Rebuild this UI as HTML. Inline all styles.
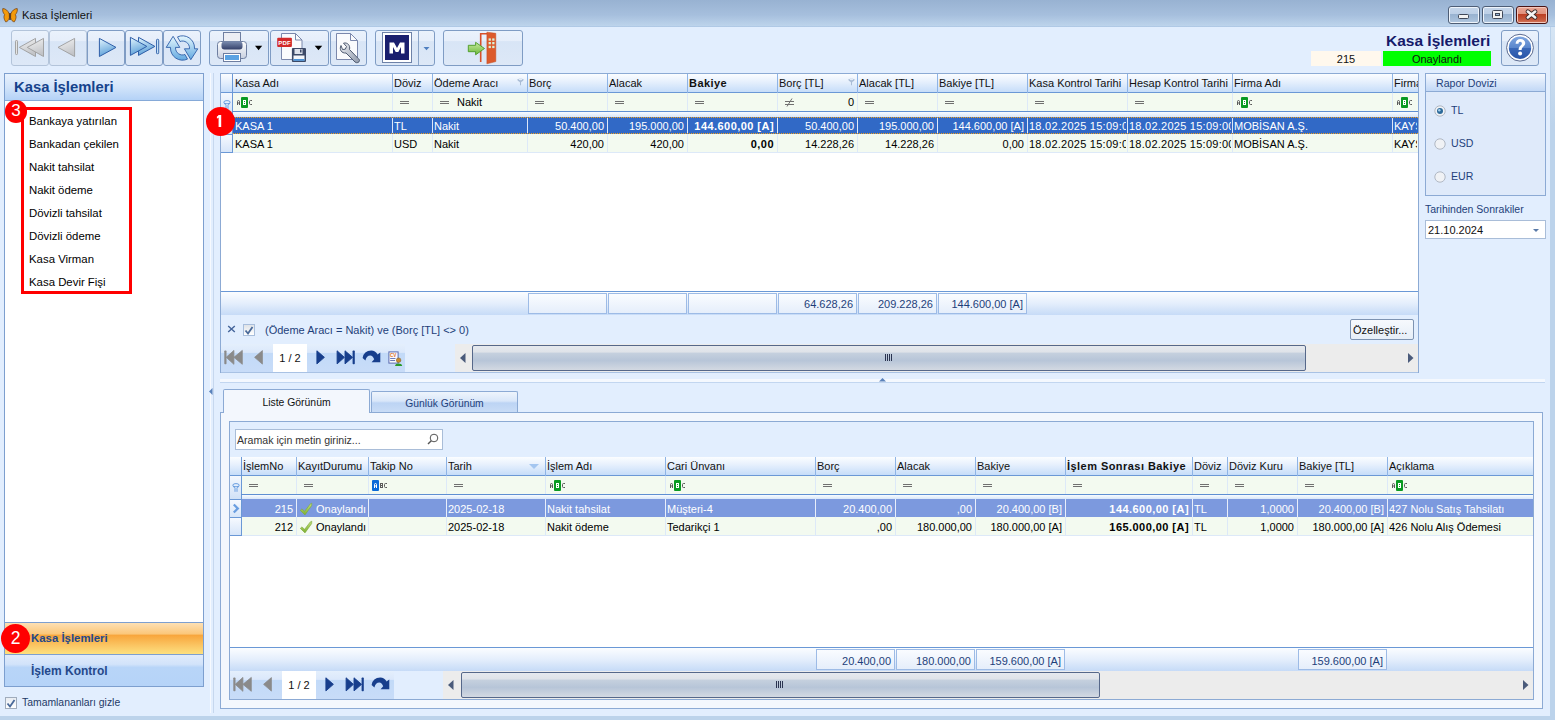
<!DOCTYPE html><html><head><meta charset="utf-8"><style>
*{box-sizing:border-box;margin:0;padding:0}
html,body{width:1555px;height:720px;overflow:hidden}
body{position:relative;background:#e2eefe;font-family:"Liberation Sans",sans-serif;font-size:11px;color:#000}
.a{position:absolute}
.t{position:absolute;white-space:nowrap;line-height:12px}
svg{position:absolute;overflow:visible}
.wb{position:absolute;top:6px;height:18px;width:32px;border:1px solid #52698a;border-radius:3px;background:linear-gradient(#e8eff8,#d3dfee 45%,#b9cbe1 50%,#cfdded)}
.tb{position:absolute;top:30px;height:36px;border:1px solid #7f9cc4;border-radius:3px;background:linear-gradient(#eaf2fc 0,#e6eefa 30%,#d8e5f6 31%,#dde8f7 100%)}
.tb.dis{border-color:#b3c4da}
.badge{position:absolute;border-radius:50%;background:#ff0000;color:#fff;text-align:center}
.hdr{position:absolute;background:linear-gradient(#f7faff,#e9f1fc 45%,#d3e3f8 100%);border-bottom:1px solid #6d97d3}
.col{position:absolute;top:0;height:100%;border-right:1px solid #8bb0e2}
.frow{position:absolute;background:#f3faf0;border-bottom:1px solid #5e8ed0}
.cell{position:absolute;top:0;height:100%;overflow:hidden;white-space:nowrap;line-height:17px;padding:0 3px}
.r{text-align:right}
.b{font-weight:bold}
.eq{position:absolute;width:9px;height:4px;border-top:1px solid #666;border-bottom:1px solid #666}
</style></head><body>
<div class="a" style="left:0;top:0;width:1555px;height:27px;background:linear-gradient(#98b2d2,#a6bfdd 55%,#bcd3eb 95%,#a8c3e2)"></div>
<svg style="left:2px;top:8px" width="16" height="15" viewBox="0 0 16 15">
<path d="M7.3 6 C6 2.5 3.5 0.6 0.8 0.5 C0.3 2.5 1 5 2.6 6.6 C1.5 8.3 1.8 11 3.6 13.8 C5.3 14 6.8 12 7.4 9.8Z" fill="#f39a0a" stroke="#6b3a10" stroke-width="0.7"/>
<path d="M8.7 6 C10 2.5 12.5 0.6 15.2 0.5 C15.7 2.5 15 5 13.4 6.6 C14.5 8.3 14.2 11 12.4 13.8 C10.7 14 9.2 12 8.6 9.8Z" fill="#f39a0a" stroke="#6b3a10" stroke-width="0.7"/>
<rect x="7.3" y="5" width="1.4" height="7" fill="#4a2a10"/></svg>
<div class="t" style="left:22px;top:9px;font-size:11.2px;color:#111">Kasa İşlemleri</div>
<div class="a" style="left:1448px;top:6px;width:32px;height:18px;border:1px solid #4e5e76;border-radius:3px;box-shadow:inset 0 0 0 1px #eef4fb;background:linear-gradient(#c6d6ea 0,#bccfe6 44%,#98b2d0 45%,#a6bed9 80%,#b6cbe2)"></div>
<div class="a" style="left:1482px;top:6px;width:32px;height:18px;border:1px solid #4e5e76;border-radius:3px;box-shadow:inset 0 0 0 1px #eef4fb;background:linear-gradient(#c6d6ea 0,#bccfe6 44%,#98b2d0 45%,#a6bed9 80%,#b6cbe2)"></div>
<div class="a" style="left:1516px;top:6px;width:32px;height:18px;border:1px solid #4a1414;border-radius:3px;box-shadow:inset 0 0 0 1px #f4c8bc;background:linear-gradient(#eaa896 0,#e0907c 44%,#bc3e22 45%,#c65a3e 80%,#d67a60)"></div>
<div class="a" style="left:1458px;top:14px;width:11px;height:5px;background:#f2f2f2;border:1px solid #404858;border-radius:1.5px"></div>
<div class="a" style="left:1492px;top:10px;width:11px;height:9px;border:1px solid #404858;border-radius:1.5px;background:#f2f2f2"></div>
<div class="a" style="left:1495px;top:13px;width:5px;height:3px;border:1px solid #404858;background:#9bb8d8"></div>
<svg style="left:1525px;top:10px" width="13" height="9" viewBox="0 0 13 9"><path d="M2.8 1.6 L10.2 7.4 M10.2 1.6 L2.8 7.4" stroke="#3a2a2a" stroke-width="4.4" stroke-linecap="round"/><path d="M2.8 1.6 L10.2 7.4 M10.2 1.6 L2.8 7.4" stroke="#f4f4f4" stroke-width="2.6" stroke-linecap="round"/></svg>
<div class="a" style="left:1550px;top:27px;width:5px;height:693px;background:#bcd3eb"></div>
<div class="a" style="left:0;top:716px;width:1555px;height:4px;background:#bcd3eb"></div>
<div class="a" style="left:1551px;top:27px;width:4px;height:98px;background:linear-gradient(#d6e5f4,#c6daee 60%,#bcd3eb)"></div>
<div class="tb dis" style="left:11px;width:38px"></div>
<div class="tb dis" style="left:49px;width:38px"></div>
<div class="tb" style="left:87px;width:38px"></div>
<div class="tb" style="left:125px;width:38px"></div>
<div class="tb" style="left:163px;width:38px"></div>
<svg style="left:11px;top:30px" width="190" height="36" viewBox="0 0 190 36">
<defs><linearGradient id="gg" x1="0" y1="0" x2="0.3" y2="1"><stop offset="0" stop-color="#f4f4f4"/><stop offset="1" stop-color="#c2c4c8"/></linearGradient>
<linearGradient id="bg" x1="0" y1="0" x2="0.3" y2="1"><stop offset="0" stop-color="#e4f6fe"/><stop offset="1" stop-color="#5b9fd8"/></linearGradient></defs>
<rect x="4.5" y="10.5" width="2" height="14" rx="0.8" fill="#e4e4e4" stroke="#9c9c9c" stroke-width="0.9"/>
<path d="M8.3 17.4 L24.5 8.4 L24.5 26.5Z" fill="url(#gg)" stroke="#9c9c9c" stroke-width="0.9"/>
<path d="M16.3 17.4 L32.5 8.4 L32.5 26.5Z" fill="url(#gg)" stroke="#9c9c9c" stroke-width="0.9"/>
<path d="M47 17.4 L63.6 8.4 L63.6 26.5Z" fill="url(#gg)" stroke="#9c9c9c" stroke-width="0.9"/>
<path d="M88.4 8.4 L105 17.4 L88.4 26.5Z" fill="url(#bg)" stroke="#2f5fa8" stroke-width="1"/>
<path d="M127.5 7.3 L143.9 16.4 L127.5 25.4Z" fill="url(#bg)" stroke="#2f5fa8" stroke-width="1"/>
<path d="M119.4 7.3 L135.8 16.4 L119.4 25.4Z" fill="url(#bg)" stroke="#2f5fa8" stroke-width="1"/>
<rect x="145.5" y="9.3" width="2.2" height="14.4" rx="0.8" fill="#c4e2f8" stroke="#2f5fa8" stroke-width="0.9"/>
<defs><linearGradient id="rg" x1="0" y1="0" x2="0" y2="1"><stop offset="0" stop-color="#e6f8fe"/><stop offset="1" stop-color="#62a8e0"/></linearGradient></defs>
<path d="M155.2 17.4 L162.1 6.3 L168.8 17.4 L164.5 17.4 L164.5 18 A7 7 0 0 0 174 24.5 L176.5 29.1 A12 12 0 0 1 159.5 18 L159.5 17.4 Z" fill="url(#rg)" stroke="#2f5fa8" stroke-width="0.9" stroke-linejoin="round"/>
<path d="M186.8 18.8 L179.8 29.7 L173.4 18.8 L178.5 18.8 L178.5 18 A7 7 0 0 0 169 11.5 L166.5 6.9 A12 12 0 0 1 183.5 18 L183.5 18.8 Z" fill="url(#rg)" stroke="#2f5fa8" stroke-width="0.9" stroke-linejoin="round"/>
</svg>
<div class="tb" style="left:209px;width:60px"></div><div class="tb" style="left:270px;width:59px"></div><div class="tb" style="left:330px;width:37px"></div>
<svg style="left:209px;top:30px" width="160" height="36" viewBox="0 0 160 36">
<defs><linearGradient id="pg" x1="0" y1="0" x2="0" y2="1"><stop offset="0" stop-color="#ffffff"/><stop offset="1" stop-color="#c8d0e0"/></linearGradient>
<linearGradient id="sg" x1="0" y1="0" x2="0" y2="1"><stop offset="0" stop-color="#7a8cb0"/><stop offset="1" stop-color="#34406a"/></linearGradient>
<linearGradient id="wg" x1="0" y1="0" x2="1" y2="1"><stop offset="0" stop-color="#eef0f4"/><stop offset="1" stop-color="#8e98aa"/></linearGradient></defs>
<rect x="14.5" y="2.5" width="17" height="12" fill="#eceef4" stroke="#6e7ea0"/>
<rect x="8.5" y="11.5" width="29" height="17" rx="3" fill="url(#pg)" stroke="#6e7ea0"/>
<rect x="12.5" y="11.5" width="21" height="8" rx="3" fill="url(#sg)"/>
<rect x="14.5" y="23.5" width="17" height="8" fill="#fff" stroke="#6e7ea0"/>
<rect x="16" y="25" width="14" height="5" fill="#5aa2e2"/>
<path d="M46 15.8 L53.2 15.8 L49.6 20.3Z" fill="#000"/>
<path d="M72.5 3.5 L86.5 3.5 L93 10 L93 29.5 L72.5 29.5Z" fill="#fafbfd" stroke="#7b88ac"/>
<path d="M86.5 3.5 L86.5 10 L93 10" fill="none" stroke="#7b88ac"/>
<rect x="68.2" y="7.8" width="14.7" height="9.2" rx="1" fill="#d22a2a"/>
<text x="69.3" y="15" font-size="6" font-weight="bold" fill="#fff" font-family="Liberation Sans" letter-spacing="0.15">PDF</text>
<rect x="82.9" y="18" width="14.1" height="14.1" rx="1" fill="#3c4a68"/>
<rect x="85.5" y="19" width="8" height="5" fill="#dde2ec"/><rect x="91" y="19.5" width="1.5" height="3" fill="#3c4a68"/>
<rect x="84.5" y="25.5" width="11" height="5" fill="#f4f6fa"/><rect x="84.5" y="29" width="11" height="1.8" fill="#4a92d8"/>
<path d="M105.7 15.7 L113.2 15.7 L109.5 20.3Z" fill="#000"/>
<path d="M127.5 3.5 L141.5 3.5 L148.5 10.5 L148.5 29.5 L127.5 29.5Z" fill="#fafbfd" stroke="#7b88ac"/>
<path d="M141.5 3.5 L141.5 10.5 L148.5 10.5" fill="none" stroke="#7b88ac"/>
<path d="M132 15.5 C130 19.5 132.5 23.5 137 23 L146 32 C147.5 33.5 150.5 32.5 150.5 30.5 C150.5 29.5 149.5 28.8 149 28.3 L140.5 19.5 C141.5 15.5 138.5 12 134.5 13.2 L137.5 16.5 L136.3 19.2 L133.5 19.5Z" fill="url(#wg)" stroke="#4e5a70" stroke-width="1"/>
</svg>
<div class="tb" style="left:375px;width:60px"></div><div class="a" style="left:418px;top:31px;width:1px;height:34px;background:#8aa4c8"></div>
<div class="a" style="left:382px;top:32px;width:30px;height:31px;border:1px solid #6e82a8;background:#fff"></div>
<div class="a" style="left:385px;top:35px;width:24px;height:25px;background:#1a1f6e"></div>
<svg style="left:389px;top:42px" width="16" height="12" viewBox="0 0 16 12"><path d="M0.5 11.5 V0.5 H5 L8 6 L11 0.5 H15.5 V11.5 H12 V5 L9.3 10 H6.7 L4 5 V11.5Z" fill="#fff"/></svg>
<svg style="left:423px;top:47px" width="7" height="4"><path d="M0.5 0 L6.5 0 L3.5 3.2Z" fill="#4f7fc0"/></svg>
<div class="tb" style="left:443px;width:80px"></div>
<svg style="left:460px;top:31px" width="50" height="34" viewBox="0 0 50 34">
<defs><linearGradient id="ag" x1="0" y1="0" x2="0" y2="1"><stop offset="0" stop-color="#c8eaa0"/><stop offset="1" stop-color="#6cb83a"/></linearGradient></defs>
<path d="M20.7 31 V2.7 H27" fill="none" stroke="#d8502a" stroke-width="1.6"/>
<path d="M26.9 1.2 L35.8 2.3 L35.8 30.6 L26.9 32.8Z" fill="#dc5a2c" stroke="#c24a1e" stroke-width="0.5"/>
<rect x="28.6" y="7.4" width="2.3" height="2.3" fill="#d8f0d8"/><rect x="32.2" y="7.4" width="2.3" height="2.3" fill="#d8f0d8"/>
<rect x="28.6" y="11" width="2.3" height="2.3" fill="#d8f0d8"/><rect x="32.2" y="11" width="2.3" height="2.3" fill="#d8f0d8"/>
<rect x="28.6" y="14.8" width="2.3" height="2.3" fill="#d8f0d8"/><rect x="32.2" y="14.8" width="2.3" height="2.3" fill="#d8f0d8"/>
<path d="M8.3 14.3 L15.6 14.3 L15.6 11.3 L24.5 17.5 L15.6 23.8 L15.6 20.7 L8.3 20.7Z" fill="url(#ag)" stroke="#4a9a24" stroke-width="0.9" stroke-linejoin="round"/>
</svg>
<div class="t" style="left:1386px;top:33px;font-size:15.5px;line-height:16px;font-weight:bold;color:#161a6a">Kasa İşlemleri</div>
<div class="a" style="left:1311px;top:51px;width:70px;height:15px;background:#fff8ed"></div>
<div class="t" style="left:1311px;top:53px;width:70px;text-align:center;color:#111">215</div>
<div class="a" style="left:1383px;top:51px;width:108px;height:15px;background:#00ff00"></div>
<div class="t" style="left:1383px;top:53px;width:108px;text-align:center;color:#111">Onaylandı</div>
<div class="tb" style="left:1501px;width:38px"></div>
<svg style="left:1505px;top:33px" width="30" height="30" viewBox="0 0 30 30">
<defs><linearGradient id="hg" x1="0" y1="0" x2="0" y2="1"><stop offset="0" stop-color="#7fa6e0"/><stop offset="0.5" stop-color="#5a86cc"/><stop offset="0.52" stop-color="#3a68b8"/><stop offset="1" stop-color="#2a56a8"/></linearGradient></defs>
<circle cx="15" cy="14.7" r="13.4" fill="#fff" stroke="#5a6a90" stroke-width="1"/>
<circle cx="15" cy="14.7" r="11.2" fill="url(#hg)"/>
<path d="M10.6 10.8 C10.6 7.6 12.8 6 15.4 6 C18.3 6 20.2 7.8 20.2 10.3 C20.2 13.2 16.9 13.6 16.6 17 L13.6 17 C13.6 12.8 16.9 12.4 16.9 10.5 C16.9 9.5 16.2 8.8 15.2 8.8 C14.1 8.8 13.5 9.6 13.5 10.8Z" fill="#fff"/>
<circle cx="15.1" cy="20.6" r="2" fill="#fff"/></svg>
<div class="a" style="left:4px;top:73px;width:200px;height:614px;border:1px solid #7d9fcf;background:#fff"></div>
<div class="a" style="left:5px;top:74px;width:198px;height:27px;background:linear-gradient(#e8f1fd,#d2e4fa 50%,#b4d2f7);border-bottom:1px solid #86aad8"></div>
<div class="t" style="left:14px;top:79px;font-size:14.8px;line-height:17px;font-weight:bold;color:#15428b">Kasa İşlemleri</div>
<div class="a" style="left:21px;top:107px;width:111px;height:187px;border:3px solid #ff0000"></div>
<div class="t" style="left:29px;top:114px;font-size:11.4px;line-height:14px;color:#000">Bankaya yatırılan</div>
<div class="t" style="left:29px;top:137px;font-size:11.4px;line-height:14px;color:#000">Bankadan çekilen</div>
<div class="t" style="left:29px;top:160px;font-size:11.4px;line-height:14px;color:#000">Nakit tahsilat</div>
<div class="t" style="left:29px;top:183px;font-size:11.4px;line-height:14px;color:#000">Nakit ödeme</div>
<div class="t" style="left:29px;top:206px;font-size:11.4px;line-height:14px;color:#000">Dövizli tahsilat</div>
<div class="t" style="left:29px;top:229px;font-size:11.4px;line-height:14px;color:#000">Dövizli ödeme</div>
<div class="t" style="left:29px;top:252px;font-size:11.4px;line-height:14px;color:#000">Kasa Virman</div>
<div class="t" style="left:29px;top:275px;font-size:11.4px;line-height:14px;color:#000">Kasa Devir Fişi</div>
<div class="badge" style="left:4.8px;top:100.4px;width:22.2px;height:22.2px;font-size:17px;line-height:22.4px">3</div>
<div class="a" style="left:5px;top:622px;width:198px;height:33px;border-top:1px solid #7d9fcf;border-bottom:1px solid #7d9fcf;background:linear-gradient(#fde0b4,#fbc77a 35%,#f8a63c 40%,#fbc866 75%,#fde07e)"></div>
<div class="t" style="left:31px;top:632px;font-size:11.4px;line-height:13px;font-weight:bold;color:#25488a">Kasa İşlemleri</div>
<div class="a" style="left:5px;top:655px;width:198px;height:31px;background:linear-gradient(#e0ebfb,#d2e3fa 30%,#b8d5f8 40%,#b5d3f8)"></div>
<div class="t" style="left:31px;top:665px;font-size:12px;line-height:13px;font-weight:bold;color:#25488a">İşlem Kontrol</div>
<div class="badge" style="left:1px;top:623.8px;width:29px;height:29px;font-size:17.5px;line-height:29px">2</div>
<div class="a" style="left:5px;top:697px;width:12px;height:12px;border:1px solid #a0acbc;background:linear-gradient(#e8ecf2,#fff)"></div>
<svg style="left:6px;top:699px" width="10" height="9"><path d="M1.5 4.5 L4 7.5 L8.5 1" fill="none" stroke="#4a6a9a" stroke-width="1.8"/></svg>
<div class="t" style="left:22px;top:697px;font-size:10.4px;color:#1e3a66">Tamamlananları gizle</div>
<div class="a" style="left:210px;top:73px;width:1px;height:640px;background:#f6f9fe"></div>
<div class="a" style="left:213px;top:73px;width:1px;height:640px;background:#c6d7ee"></div>
<svg style="left:209px;top:388px" width="4" height="7"><path d="M3.5 0 L0 3.5 L3.5 7Z" fill="#5a82bb"/></svg>
<div class="a" style="left:220px;top:73px;width:1199px;height:300px;border:1px solid #8caad4;background:#fff"></div>
<div class="a" style="left:221px;top:74px;width:1197px;height:19px;background:linear-gradient(#fbfdff,#e8f1fd 40%,#c6ddf9);border-bottom:1px solid #6a98d6"></div><div class="a" style="left:232px;top:74px;width:1px;height:19px;background:#6a98d6"></div><div class="a" style="left:392px;top:74px;width:1px;height:19px;background:#8eb4e6"></div><div class="t" style="left:235px;top:77px;width:157px;overflow:hidden;color:#111;">Kasa Adı</div><div class="a" style="left:432px;top:74px;width:1px;height:19px;background:#8eb4e6"></div><div class="t" style="left:394px;top:77px;width:38px;overflow:hidden;color:#111;">Döviz</div><div class="a" style="left:527px;top:74px;width:1px;height:19px;background:#8eb4e6"></div><div class="t" style="left:434px;top:77px;width:93px;overflow:hidden;color:#111;">Ödeme Aracı</div><div class="a" style="left:607px;top:74px;width:1px;height:19px;background:#8eb4e6"></div><div class="t" style="left:529px;top:77px;width:78px;overflow:hidden;color:#111;">Borç</div><div class="a" style="left:687px;top:74px;width:1px;height:19px;background:#8eb4e6"></div><div class="t" style="left:609px;top:77px;width:78px;overflow:hidden;color:#111;">Alacak</div><div class="a" style="left:777px;top:74px;width:1px;height:19px;background:#8eb4e6"></div><div class="t" style="left:689px;top:77px;width:88px;overflow:hidden;color:#111;font-weight:bold;letter-spacing:0.45px">Bakiye</div><div class="a" style="left:857px;top:74px;width:1px;height:19px;background:#8eb4e6"></div><div class="t" style="left:779px;top:77px;width:78px;overflow:hidden;color:#111;">Borç [TL]</div><div class="a" style="left:937px;top:74px;width:1px;height:19px;background:#8eb4e6"></div><div class="t" style="left:859px;top:77px;width:78px;overflow:hidden;color:#111;">Alacak [TL]</div><div class="a" style="left:1027px;top:74px;width:1px;height:19px;background:#8eb4e6"></div><div class="t" style="left:939px;top:77px;width:88px;overflow:hidden;color:#111;">Bakiye [TL]</div><div class="a" style="left:1127px;top:74px;width:1px;height:19px;background:#8eb4e6"></div><div class="t" style="left:1029px;top:77px;width:98px;overflow:hidden;color:#111;">Kasa Kontrol Tarihi</div><div class="a" style="left:1232px;top:74px;width:1px;height:19px;background:#8eb4e6"></div><div class="t" style="left:1129px;top:77px;width:103px;overflow:hidden;color:#111;">Hesap Kontrol Tarihi</div><div class="a" style="left:1392px;top:74px;width:1px;height:19px;background:#8eb4e6"></div><div class="t" style="left:1234px;top:77px;width:158px;overflow:hidden;color:#111;">Firma Adı</div><div class="t" style="left:1394px;top:77px;width:24px;overflow:hidden;color:#111;">Firma</div>
<svg style="left:517px;top:78px" width="7" height="8" viewBox="0 0 7 8"><path d="M0.3 1.6 C0.3 0.4 6.7 0.4 6.7 1.6 C6.7 3 4.3 3.6 4 4.6 V7.2 H3 V4.6 C2.7 3.6 0.3 3 0.3 1.6Z" fill="#a9bcd6"/><ellipse cx="3.5" cy="1.5" rx="2" ry="0.7" fill="#e4ecf8"/></svg>
<svg style="left:848px;top:78px" width="7" height="8" viewBox="0 0 7 8"><path d="M0.3 1.6 C0.3 0.4 6.7 0.4 6.7 1.6 C6.7 3 4.3 3.6 4 4.6 V7.2 H3 V4.6 C2.7 3.6 0.3 3 0.3 1.6Z" fill="#a9bcd6"/><ellipse cx="3.5" cy="1.5" rx="2" ry="0.7" fill="#e4ecf8"/></svg>
<div class="a" style="left:221px;top:93px;width:1197px;height:19px;background:#f3faf0;border-bottom:1px solid #5f8fd2"></div>
<div class="a" style="left:221px;top:93px;width:11px;height:18px;background:linear-gradient(90deg,#e3edf9,#d3e3f8)"></div>
<div class="a" style="left:232px;top:93px;width:1px;height:18px;background:#6a98d6"></div>
<div class="a" style="left:392px;top:93px;width:1px;height:18px;background:#dde9f8"></div>
<div class="a" style="left:432px;top:93px;width:1px;height:18px;background:#dde9f8"></div>
<div class="a" style="left:527px;top:93px;width:1px;height:18px;background:#dde9f8"></div>
<div class="a" style="left:607px;top:93px;width:1px;height:18px;background:#dde9f8"></div>
<div class="a" style="left:687px;top:93px;width:1px;height:18px;background:#dde9f8"></div>
<div class="a" style="left:777px;top:93px;width:1px;height:18px;background:#dde9f8"></div>
<div class="a" style="left:857px;top:93px;width:1px;height:18px;background:#dde9f8"></div>
<div class="a" style="left:937px;top:93px;width:1px;height:18px;background:#dde9f8"></div>
<div class="a" style="left:1027px;top:93px;width:1px;height:18px;background:#dde9f8"></div>
<div class="a" style="left:1127px;top:93px;width:1px;height:18px;background:#dde9f8"></div>
<div class="a" style="left:1232px;top:93px;width:1px;height:18px;background:#dde9f8"></div>
<div class="a" style="left:1392px;top:93px;width:1px;height:18px;background:#dde9f8"></div>
<svg style="left:237px;top:97px" width="16" height="11" viewBox="0 0 16 11"><path d="M0.5 8 V4.5 Q0.5 3.5 1.5 3.5 Q2.5 3.5 2.5 4.5 V8 M0 6 H3" fill="none" stroke="#5a5a5a" stroke-width="1"/><rect x="4" y="0" width="7" height="11" rx="1" fill="#0a9a22"/><rect x="6" y="3" width="3" height="5" fill="#fff"/><rect x="7" y="4" width="1" height="1" fill="#0a9a22"/><rect x="7" y="6" width="1" height="1" fill="#0a9a22"/><path d="M15 3.5 H13.5 Q12.5 3.5 12.5 4.5 V6.5 Q12.5 7.5 13.5 7.5 H15" fill="none" stroke="#5a5a5a" stroke-width="1"/></svg>
<div class="a" style="left:400px;top:101px;width:9px;height:3px;border-top:1px solid #707070;border-bottom:1px solid #707070"></div>
<div class="a" style="left:440px;top:101px;width:9px;height:3px;border-top:1px solid #707070;border-bottom:1px solid #707070"></div>
<div class="a" style="left:535px;top:101px;width:9px;height:3px;border-top:1px solid #707070;border-bottom:1px solid #707070"></div>
<div class="a" style="left:615px;top:101px;width:9px;height:3px;border-top:1px solid #707070;border-bottom:1px solid #707070"></div>
<div class="a" style="left:695px;top:101px;width:9px;height:3px;border-top:1px solid #707070;border-bottom:1px solid #707070"></div>
<div class="a" style="left:945px;top:101px;width:9px;height:3px;border-top:1px solid #707070;border-bottom:1px solid #707070"></div>
<div class="a" style="left:1035px;top:101px;width:9px;height:3px;border-top:1px solid #707070;border-bottom:1px solid #707070"></div>
<div class="a" style="left:1135px;top:101px;width:9px;height:3px;border-top:1px solid #707070;border-bottom:1px solid #707070"></div>
<div class="t" style="left:457px;top:96px">Nakit</div>
<svg style="left:785px;top:98px" width="10" height="9"><path d="M0 3.5 H9 M0 6.5 H9 M2 8.5 L7 0.5" stroke="#707070" stroke-width="1" fill="none"/></svg>
<div class="t" style="left:848px;top:96px">0</div>
<div class="a" style="left:865px;top:101px;width:9px;height:3px;border-top:1px solid #707070;border-bottom:1px solid #707070"></div>
<svg style="left:1237px;top:97px" width="16" height="11" viewBox="0 0 16 11"><path d="M0.5 8 V4.5 Q0.5 3.5 1.5 3.5 Q2.5 3.5 2.5 4.5 V8 M0 6 H3" fill="none" stroke="#5a5a5a" stroke-width="1"/><rect x="4" y="0" width="7" height="11" rx="1" fill="#0a9a22"/><rect x="6" y="3" width="3" height="5" fill="#fff"/><rect x="7" y="4" width="1" height="1" fill="#0a9a22"/><rect x="7" y="6" width="1" height="1" fill="#0a9a22"/><path d="M15 3.5 H13.5 Q12.5 3.5 12.5 4.5 V6.5 Q12.5 7.5 13.5 7.5 H15" fill="none" stroke="#5a5a5a" stroke-width="1"/></svg>
<svg style="left:1397px;top:97px" width="16" height="11" viewBox="0 0 16 11"><path d="M0.5 8 V4.5 Q0.5 3.5 1.5 3.5 Q2.5 3.5 2.5 4.5 V8 M0 6 H3" fill="none" stroke="#5a5a5a" stroke-width="1"/><rect x="4" y="0" width="7" height="11" rx="1" fill="#0a9a22"/><rect x="6" y="3" width="3" height="5" fill="#fff"/><rect x="7" y="4" width="1" height="1" fill="#0a9a22"/><rect x="7" y="6" width="1" height="1" fill="#0a9a22"/><path d="M15 3.5 H13.5 Q12.5 3.5 12.5 4.5 V6.5 Q12.5 7.5 13.5 7.5 H15" fill="none" stroke="#5a5a5a" stroke-width="1"/></svg>
<div class="a" style="left:221px;top:112px;width:1197px;height:5px;background:linear-gradient(#f8fbff,#d8e6f9)"></div>
<div class="a" style="left:221px;top:93px;width:11px;height:24px;background:linear-gradient(#f4f8fe,#d0e1f7)"></div>
<div class="a" style="left:221px;top:117px;width:11px;height:17px;background:linear-gradient(#f6f9fe,#d6e5f9)"></div>
<div class="a" style="left:221px;top:135px;width:11px;height:17px;background:linear-gradient(#f6f9fe,#d6e5f9)"></div>
<div class="a" style="left:232px;top:112px;width:1px;height:40px;background:#6a98d6"></div>
<div class="a" style="left:221px;top:134px;width:11px;height:1px;background:#6a98d6"></div>
<svg style="left:223px;top:100px" width="8" height="9" viewBox="0 0 8 9"><ellipse cx="4" cy="2.2" rx="3.2" ry="1.6" fill="none" stroke="#6a9ee0" stroke-width="1"/><path d="M1 3 L3 5.3 V8.8 M7 3 L5 5.3 V8.8" fill="none" stroke="#6a9ee0" stroke-width="1"/></svg>
<div class="a" style="left:221px;top:152px;width:12px;height:1px;background:#6a98d6"></div>
<div class="a" style="left:233px;top:117px;width:1185px;height:17px;background:#3169c6"></div>
<div class="a" style="left:233px;top:117px;width:1185px;height:1px;border-top:1px dotted #f0a020"></div>
<div class="a" style="left:233px;top:133px;width:1185px;height:1px;border-top:1px dotted #f0a020"></div>
<div class="a" style="left:392px;top:118px;width:1px;height:15px;background:#dce6f8"></div>
<div class="a" style="left:432px;top:118px;width:1px;height:15px;background:#dce6f8"></div>
<div class="a" style="left:527px;top:118px;width:1px;height:15px;background:#dce6f8"></div>
<div class="a" style="left:607px;top:118px;width:1px;height:15px;background:#dce6f8"></div>
<div class="a" style="left:687px;top:118px;width:1px;height:15px;background:#dce6f8"></div>
<div class="a" style="left:777px;top:118px;width:1px;height:15px;background:#dce6f8"></div>
<div class="a" style="left:857px;top:118px;width:1px;height:15px;background:#dce6f8"></div>
<div class="a" style="left:937px;top:118px;width:1px;height:15px;background:#dce6f8"></div>
<div class="a" style="left:1027px;top:118px;width:1px;height:15px;background:#dce6f8"></div>
<div class="a" style="left:1127px;top:118px;width:1px;height:15px;background:#dce6f8"></div>
<div class="a" style="left:1232px;top:118px;width:1px;height:15px;background:#dce6f8"></div>
<div class="a" style="left:1392px;top:118px;width:1px;height:15px;background:#dce6f8"></div>
<div class="t" style="left:235px;top:120px;width:156px;overflow:hidden;color:#fff;">KASA 1</div>
<div class="t" style="left:394px;top:120px;width:37px;overflow:hidden;color:#fff;">TL</div>
<div class="t" style="left:434px;top:120px;width:92px;overflow:hidden;color:#fff;">Nakit</div>
<div class="t" style="left:527px;top:120px;width:77px;text-align:right;color:#fff;">50.400,00</div>
<div class="t" style="left:607px;top:120px;width:77px;text-align:right;color:#fff;">195.000,00</div>
<div class="t" style="left:687px;top:120px;width:87px;text-align:right;color:#fff;font-weight:bold;letter-spacing:0.45px">144.600,00 [A]</div>
<div class="t" style="left:777px;top:120px;width:77px;text-align:right;color:#fff;">50.400,00</div>
<div class="t" style="left:857px;top:120px;width:77px;text-align:right;color:#fff;">195.000,00</div>
<div class="t" style="left:937px;top:120px;width:87px;text-align:right;color:#fff;">144.600,00 [A]</div>
<div class="t" style="left:1029px;top:120px;width:97px;overflow:hidden;color:#fff;letter-spacing:0.25px;">18.02.2025 15:09:00</div>
<div class="t" style="left:1129px;top:120px;width:102px;overflow:hidden;color:#fff;letter-spacing:0.25px;">18.02.2025 15:09:00</div>
<div class="t" style="left:1234px;top:120px;width:157px;overflow:hidden;color:#fff;">MOBİSAN A.Ş.</div>
<div class="t" style="left:1394px;top:120px;width:23px;overflow:hidden;color:#fff;">KAYSERİ</div>
<div class="a" style="left:233px;top:134px;width:1185px;height:19px;background:#f3faf0;border-bottom:1px solid #dde9f8"></div>
<div class="a" style="left:392px;top:134px;width:1px;height:19px;background:#dde9f8"></div>
<div class="a" style="left:432px;top:134px;width:1px;height:19px;background:#dde9f8"></div>
<div class="a" style="left:527px;top:134px;width:1px;height:19px;background:#dde9f8"></div>
<div class="a" style="left:607px;top:134px;width:1px;height:19px;background:#dde9f8"></div>
<div class="a" style="left:687px;top:134px;width:1px;height:19px;background:#dde9f8"></div>
<div class="a" style="left:777px;top:134px;width:1px;height:19px;background:#dde9f8"></div>
<div class="a" style="left:857px;top:134px;width:1px;height:19px;background:#dde9f8"></div>
<div class="a" style="left:937px;top:134px;width:1px;height:19px;background:#dde9f8"></div>
<div class="a" style="left:1027px;top:134px;width:1px;height:19px;background:#dde9f8"></div>
<div class="a" style="left:1127px;top:134px;width:1px;height:19px;background:#dde9f8"></div>
<div class="a" style="left:1232px;top:134px;width:1px;height:19px;background:#dde9f8"></div>
<div class="a" style="left:1392px;top:134px;width:1px;height:19px;background:#dde9f8"></div>
<div class="t" style="left:235px;top:138px;width:156px;overflow:hidden;color:#000;">KASA 1</div>
<div class="t" style="left:394px;top:138px;width:37px;overflow:hidden;color:#000;">USD</div>
<div class="t" style="left:434px;top:138px;width:92px;overflow:hidden;color:#000;">Nakit</div>
<div class="t" style="left:527px;top:138px;width:77px;text-align:right;color:#000;">420,00</div>
<div class="t" style="left:607px;top:138px;width:77px;text-align:right;color:#000;">420,00</div>
<div class="t" style="left:687px;top:138px;width:87px;text-align:right;color:#000;font-weight:bold;letter-spacing:0.45px">0,00</div>
<div class="t" style="left:777px;top:138px;width:77px;text-align:right;color:#000;">14.228,26</div>
<div class="t" style="left:857px;top:138px;width:77px;text-align:right;color:#000;">14.228,26</div>
<div class="t" style="left:937px;top:138px;width:87px;text-align:right;color:#000;">0,00</div>
<div class="t" style="left:1029px;top:138px;width:97px;overflow:hidden;color:#000;letter-spacing:0.25px;">18.02.2025 15:09:00</div>
<div class="t" style="left:1129px;top:138px;width:102px;overflow:hidden;color:#000;letter-spacing:0.25px;">18.02.2025 15:09:00</div>
<div class="t" style="left:1234px;top:138px;width:157px;overflow:hidden;color:#000;">MOBİSAN A.Ş.</div>
<div class="t" style="left:1394px;top:138px;width:23px;overflow:hidden;color:#000;">KAYSERİ</div>
<div class="a" style="left:221px;top:291px;width:1197px;height:24px;border-top:1px solid #6a98d6;background:linear-gradient(#fbfdff,#e4eefc 50%,#c6dbf7)"></div>
<div class="a" style="left:528px;top:293px;width:79px;height:21px;border:1px solid #9dbbe6;background:linear-gradient(#fafcff,#e5eefb)"></div>
<div class="a" style="left:608px;top:293px;width:79px;height:21px;border:1px solid #9dbbe6;background:linear-gradient(#fafcff,#e5eefb)"></div>
<div class="a" style="left:688px;top:293px;width:89px;height:21px;border:1px solid #9dbbe6;background:linear-gradient(#fafcff,#e5eefb)"></div>
<div class="a" style="left:778px;top:293px;width:79px;height:21px;border:1px solid #9dbbe6;background:linear-gradient(#fafcff,#e5eefb)"></div>
<div class="t" style="left:778px;top:298px;width:75px;text-align:right;color:#1e3f7a">64.628,26</div>
<div class="a" style="left:858px;top:293px;width:79px;height:21px;border:1px solid #9dbbe6;background:linear-gradient(#fafcff,#e5eefb)"></div>
<div class="t" style="left:858px;top:298px;width:75px;text-align:right;color:#1e3f7a">209.228,26</div>
<div class="a" style="left:938px;top:293px;width:89px;height:21px;border:1px solid #9dbbe6;background:linear-gradient(#fafcff,#e5eefb)"></div>
<div class="t" style="left:938px;top:298px;width:85px;text-align:right;color:#1e3f7a">144.600,00 [A]</div>
<div class="a" style="left:221px;top:315px;width:1197px;height:29px;background:#e2eefe"></div>
<svg style="left:227px;top:325px" width="9" height="8"><path d="M1.2 1 L7.8 7 M7.8 1 L1.2 7" stroke="#44649a" stroke-width="1.4"/></svg>
<div class="a" style="left:243px;top:324px;width:12px;height:12px;border:1px solid #a8bedc;background:linear-gradient(#dfe3e8,#fff)"></div>
<svg style="left:244px;top:326px" width="10" height="9"><path d="M1.5 4.5 L4 7.5 L8.5 1" fill="none" stroke="#4a6a9a" stroke-width="1.8"/></svg>
<div class="t" style="left:265px;top:324px;color:#1e3f7a">(Ödeme Aracı = Nakit) ve (Borç [TL] &lt;&gt; 0)</div>
<div class="a" style="left:1350px;top:319px;width:64px;height:21px;border:1px solid #7d93b2;border-radius:2px;background:linear-gradient(#f6f9fd,#e6eef8)"></div>
<div class="t" style="left:1353px;top:324px;color:#111">Özelleştir...</div>
<div class="a" style="left:221px;top:344px;width:184px;height:28px;background:linear-gradient(#e4effc,#dbe8fb 30%,#c2daf8 33%,#c8dcf8)"></div><div class="a" style="left:273px;top:344px;width:34px;height:28px;background:#fff"></div><div class="t" style="left:273px;top:352px;width:34px;text-align:center;color:#111">1 / 2</div><svg style="left:221px;top:344px" width="52" height="28" viewBox="0 0 52 28"><rect x="3.3" y="6.4" width="2.2" height="13.9" rx="0.8" fill="#8a8a8a"/><path d="M5.2 13.35 L12.9 6.4 V20.3Z M12.9 13.35 L21.3 6.4 V20.3Z" fill="#8a8a8a" stroke="#8a8a8a" stroke-width="0.8" stroke-linejoin="round"/><path d="M33.6 13.35 L41.4 6.6 V20.1Z" fill="#8a8a8a" stroke="#8a8a8a" stroke-width="0.8" stroke-linejoin="round"/></svg><svg style="left:307px;top:344px" width="98" height="28" viewBox="0 0 98 28"><path d="M9.9 6.8 L17.4 13.35 L9.9 19.9Z" fill="#173e8c" stroke="#173e8c" stroke-width="0.9" stroke-linejoin="round"/><path d="M30.1 6.8 L37.4 13.35 L30.1 19.9Z M38 6.8 L45.6 13.35 L38 19.9Z" fill="#173e8c" stroke="#173e8c" stroke-width="0.9" stroke-linejoin="round"/><rect x="45.6" y="6.4" width="2.2" height="13.9" rx="0.8" fill="#173e8c"/><path d="M55.6 14 Q56.8 6.4 64.3 6.4 Q68.3 6.4 70.6 10.4 L73.3 8.4 L73.3 18.2 L64.6 18.2 L67.2 15.2 Q65.8 11.4 63.3 11.4 Q59.6 11.4 58.4 16.4 Z" fill="#173e8c"/><rect x="81.9" y="7.9" width="9.2" height="11.2" fill="#fafafe" stroke="#5a6ab0" stroke-width="1"/><text x="83" y="12.6" font-size="4.6" font-weight="bold" fill="#e0701a" font-family="Liberation Sans">CV</text><path d="M83.2 14.5 H88.5 M83.2 16.5 H88" stroke="#5a6ab0" stroke-width="0.9"/><circle cx="91.6" cy="16.2" r="2.3" fill="#c88a30" stroke="#6a4a10" stroke-width="0.4"/><path d="M88 22 C88.5 18.8 94.7 18.8 95.2 22Z" fill="#2a9a2a"/></svg><div class="a" style="left:405px;top:344px;width:50px;height:28px;background:#e2eefe"></div><div class="a" style="left:455px;top:344px;width:963px;height:28px;background:#ececec"></div><svg style="left:460px;top:353px" width="6" height="10"><path d="M5.5 0 L0 5 L5.5 10Z" fill="#4a5a7a"/></svg><svg style="left:1408px;top:353px" width="6" height="10"><path d="M0 0 L5.5 5 L0 10Z" fill="#4a5a7a"/></svg><div class="a" style="left:472px;top:345px;width:834px;height:26px;border:1px solid #56688a;border-radius:2px;background:linear-gradient(#e6e9ee,#dfe3e9 25%,#c5d0de 30%,#b7c5d8 60%,#d3d9e2)"></div><svg style="left:885px;top:354px" width="8" height="8"><path d="M0.5 0 V7 M2.5 0 V7 M4.5 0 V7 M6.5 0 V7" stroke="#2a3350" stroke-width="1"/></svg>
<div class="a" style="left:221px;top:372px;width:1197px;height:1px;background:#a9c2e4"></div>
<div class="a" style="left:1425px;top:73px;width:121px;height:123px;border:1px solid #8caad4;background:#dfeafa"></div>
<div class="a" style="left:1426px;top:74px;width:119px;height:18px;background:linear-gradient(#f5f9ff,#dbe8fa 50%,#c2d8f6);border-bottom:1px solid #8caad4"></div>
<div class="t" style="left:1436px;top:77px;font-size:10.6px;color:#1e3f7a">Rapor Dovizi</div>
<svg style="left:1434px;top:105px" width="12" height="12"><circle cx="6" cy="6" r="5.2" fill="#f0f2f5" stroke="#b0b8c4" stroke-width="1"/><circle cx="6" cy="6" r="3" fill="#2c6a9a"/><circle cx="5.3" cy="5.3" r="1.2" fill="#a8d0ec"/></svg>
<div class="t" style="left:1451px;top:104px;font-size:10.6px;color:#1e3f7a">TL</div>
<svg style="left:1434px;top:137.5px" width="12" height="12"><circle cx="6" cy="6" r="5.2" fill="#f0f2f5" stroke="#b0b8c4" stroke-width="1"/></svg>
<div class="t" style="left:1451px;top:136.5px;font-size:10.6px;color:#1e3f7a">USD</div>
<svg style="left:1434px;top:170.5px" width="12" height="12"><circle cx="6" cy="6" r="5.2" fill="#f0f2f5" stroke="#b0b8c4" stroke-width="1"/></svg>
<div class="t" style="left:1451px;top:169.5px;font-size:10.6px;color:#1e3f7a">EUR</div>
<div class="t" style="left:1425px;top:203px;font-size:10.5px;color:#1e3f7a">Tarihinden Sonrakiler</div>
<div class="a" style="left:1425px;top:220px;width:121px;height:19px;border:1px solid #a9bdd8;background:#fff"></div>
<div class="t" style="left:1428px;top:224px;color:#111">21.10.2024</div>
<svg style="left:1533px;top:229px" width="6" height="4"><path d="M0 0 H6 L3 3Z" fill="#5a7aa8"/></svg>
<div class="a" style="left:220px;top:379px;width:1325px;height:3px;background:#f4f8fe"></div>
<div class="a" style="left:220px;top:382px;width:1325px;height:1px;background:#c2d6f0"></div>
<svg style="left:879px;top:378px" width="7" height="4"><path d="M0 3.5 L3.5 0 L7 3.5Z" fill="#5a82bb"/></svg>
<div class="a" style="left:220px;top:412px;width:1323px;height:297px;border:1px solid #8caad4;background:#f3f7fd"></div>
<div class="a" style="left:223px;top:389px;width:147px;height:24px;border:1px solid #8caad4;border-bottom:none;border-radius:2px 2px 0 0;background:#f3f7fd"></div>
<div class="t" style="left:223px;top:397px;width:147px;text-align:center;font-size:10.4px;color:#111">Liste Görünüm</div>
<div class="a" style="left:371px;top:391px;width:147px;height:21px;border:1px solid #8caad4;border-bottom:none;border-radius:2px 2px 0 0;background:linear-gradient(#eef4fc,#d9e7f9 45%,#bcd4f4 55%,#c9dcf6)"></div>
<div class="t" style="left:371px;top:398px;width:147px;text-align:center;font-size:10.3px;color:#1e3f7a">Günlük Görünüm</div>
<div class="a" style="left:229px;top:421px;width:1305px;height:279px;border:1px solid #8caad4;background:#e2eefe"></div>
<div class="a" style="left:235px;top:429px;width:208px;height:21px;border:1px solid #a9bdd8;background:#fff"></div>
<div class="t" style="left:237px;top:434px;font-size:10.6px;color:#333">Aramak için metin giriniz...</div>
<svg style="left:427px;top:433px" width="12" height="12"><circle cx="7" cy="5" r="3.8" fill="none" stroke="#555" stroke-width="1"/><path d="M4.3 7.7 L1 11" stroke="#555" stroke-width="1.4"/></svg>
<div class="a" style="left:230px;top:457px;width:1303px;height:190px;background:#fff"></div>
<div class="a" style="left:230px;top:457px;width:1303px;height:19px;background:linear-gradient(#fbfdff,#e8f1fd 40%,#c6ddf9);border-bottom:1px solid #6a98d6"></div><div class="a" style="left:241px;top:457px;width:1px;height:19px;background:#6a98d6"></div><div class="a" style="left:296px;top:457px;width:1px;height:19px;background:#8eb4e6"></div><div class="t" style="left:243px;top:460px;width:53px;overflow:hidden;color:#111;">İşlemNo</div><div class="a" style="left:368px;top:457px;width:1px;height:19px;background:#8eb4e6"></div><div class="t" style="left:298px;top:460px;width:70px;overflow:hidden;color:#111;">KayıtDurumu</div><div class="a" style="left:446px;top:457px;width:1px;height:19px;background:#8eb4e6"></div><div class="t" style="left:370px;top:460px;width:76px;overflow:hidden;color:#111;">Takip No</div><div class="a" style="left:545px;top:457px;width:1px;height:19px;background:#8eb4e6"></div><div class="t" style="left:448px;top:460px;width:97px;overflow:hidden;color:#111;">Tarih</div><div class="a" style="left:665px;top:457px;width:1px;height:19px;background:#8eb4e6"></div><div class="t" style="left:547px;top:460px;width:118px;overflow:hidden;color:#111;">İşlem Adı</div><div class="a" style="left:815px;top:457px;width:1px;height:19px;background:#8eb4e6"></div><div class="t" style="left:667px;top:460px;width:148px;overflow:hidden;color:#111;">Cari Ünvanı</div><div class="a" style="left:895px;top:457px;width:1px;height:19px;background:#8eb4e6"></div><div class="t" style="left:817px;top:460px;width:78px;overflow:hidden;color:#111;">Borç</div><div class="a" style="left:975px;top:457px;width:1px;height:19px;background:#8eb4e6"></div><div class="t" style="left:897px;top:460px;width:78px;overflow:hidden;color:#111;">Alacak</div><div class="a" style="left:1065px;top:457px;width:1px;height:19px;background:#8eb4e6"></div><div class="t" style="left:977px;top:460px;width:88px;overflow:hidden;color:#111;">Bakiye</div><div class="a" style="left:1192px;top:457px;width:1px;height:19px;background:#8eb4e6"></div><div class="t" style="left:1067px;top:460px;width:125px;overflow:hidden;color:#111;font-weight:bold;letter-spacing:0.45px">İşlem Sonrası Bakiye</div><div class="a" style="left:1227px;top:457px;width:1px;height:19px;background:#8eb4e6"></div><div class="t" style="left:1194px;top:460px;width:33px;overflow:hidden;color:#111;">Döviz</div><div class="a" style="left:1297px;top:457px;width:1px;height:19px;background:#8eb4e6"></div><div class="t" style="left:1229px;top:460px;width:68px;overflow:hidden;color:#111;">Döviz Kuru</div><div class="a" style="left:1387px;top:457px;width:1px;height:19px;background:#8eb4e6"></div><div class="t" style="left:1299px;top:460px;width:88px;overflow:hidden;color:#111;">Bakiye [TL]</div><div class="t" style="left:1389px;top:460px;width:144px;overflow:hidden;color:#111;">Açıklama</div>
<svg style="left:529px;top:464px" width="10" height="6"><path d="M0 0 H10 L5 5Z" fill="#a4c6f0"/></svg>
<div class="a" style="left:230px;top:476px;width:1303px;height:19px;background:#f3faf0;border-bottom:1px solid #5f8fd2"></div>
<div class="a" style="left:230px;top:476px;width:11px;height:18px;background:linear-gradient(90deg,#e3edf9,#d3e3f8)"></div>
<div class="a" style="left:241px;top:476px;width:1px;height:18px;background:#6a98d6"></div>
<div class="a" style="left:296px;top:476px;width:1px;height:18px;background:#dde9f8"></div>
<div class="a" style="left:368px;top:476px;width:1px;height:18px;background:#dde9f8"></div>
<div class="a" style="left:446px;top:476px;width:1px;height:18px;background:#dde9f8"></div>
<div class="a" style="left:545px;top:476px;width:1px;height:18px;background:#dde9f8"></div>
<div class="a" style="left:665px;top:476px;width:1px;height:18px;background:#dde9f8"></div>
<div class="a" style="left:815px;top:476px;width:1px;height:18px;background:#dde9f8"></div>
<div class="a" style="left:895px;top:476px;width:1px;height:18px;background:#dde9f8"></div>
<div class="a" style="left:975px;top:476px;width:1px;height:18px;background:#dde9f8"></div>
<div class="a" style="left:1065px;top:476px;width:1px;height:18px;background:#dde9f8"></div>
<div class="a" style="left:1192px;top:476px;width:1px;height:18px;background:#dde9f8"></div>
<div class="a" style="left:1227px;top:476px;width:1px;height:18px;background:#dde9f8"></div>
<div class="a" style="left:1297px;top:476px;width:1px;height:18px;background:#dde9f8"></div>
<div class="a" style="left:1387px;top:476px;width:1px;height:18px;background:#dde9f8"></div>
<div class="a" style="left:249px;top:484px;width:9px;height:3px;border-top:1px solid #707070;border-bottom:1px solid #707070"></div>
<div class="a" style="left:304px;top:484px;width:9px;height:3px;border-top:1px solid #707070;border-bottom:1px solid #707070"></div>
<div class="a" style="left:454px;top:484px;width:9px;height:3px;border-top:1px solid #707070;border-bottom:1px solid #707070"></div>
<div class="a" style="left:823px;top:484px;width:9px;height:3px;border-top:1px solid #707070;border-bottom:1px solid #707070"></div>
<div class="a" style="left:903px;top:484px;width:9px;height:3px;border-top:1px solid #707070;border-bottom:1px solid #707070"></div>
<div class="a" style="left:983px;top:484px;width:9px;height:3px;border-top:1px solid #707070;border-bottom:1px solid #707070"></div>
<div class="a" style="left:1073px;top:484px;width:9px;height:3px;border-top:1px solid #707070;border-bottom:1px solid #707070"></div>
<div class="a" style="left:1200px;top:484px;width:9px;height:3px;border-top:1px solid #707070;border-bottom:1px solid #707070"></div>
<div class="a" style="left:1235px;top:484px;width:9px;height:3px;border-top:1px solid #707070;border-bottom:1px solid #707070"></div>
<div class="a" style="left:1305px;top:484px;width:9px;height:3px;border-top:1px solid #707070;border-bottom:1px solid #707070"></div>
<svg style="left:372px;top:480px" width="16" height="11" viewBox="0 0 16 11"><rect x="0" y="0" width="7" height="11" rx="1" fill="#0a6ad8"/><path d="M2.5 8 V4.5 Q2.5 3.5 3.5 3.5 Q4.5 3.5 4.5 4.5 V8 M2 6 H5" fill="none" stroke="#fff" stroke-width="1"/><rect x="8" y="3" width="3" height="5" fill="#5a5a5a"/><rect x="9" y="4" width="1" height="1" fill="#f3faf0"/><rect x="9" y="6" width="1" height="1" fill="#f3faf0"/><path d="M15 3.5 H13.5 Q12.5 3.5 12.5 4.5 V6.5 Q12.5 7.5 13.5 7.5 H15" fill="none" stroke="#5a5a5a" stroke-width="1"/></svg>
<svg style="left:550px;top:480px" width="16" height="11" viewBox="0 0 16 11"><path d="M0.5 8 V4.5 Q0.5 3.5 1.5 3.5 Q2.5 3.5 2.5 4.5 V8 M0 6 H3" fill="none" stroke="#5a5a5a" stroke-width="1"/><rect x="4" y="0" width="7" height="11" rx="1" fill="#0a9a22"/><rect x="6" y="3" width="3" height="5" fill="#fff"/><rect x="7" y="4" width="1" height="1" fill="#0a9a22"/><rect x="7" y="6" width="1" height="1" fill="#0a9a22"/><path d="M15 3.5 H13.5 Q12.5 3.5 12.5 4.5 V6.5 Q12.5 7.5 13.5 7.5 H15" fill="none" stroke="#5a5a5a" stroke-width="1"/></svg>
<svg style="left:670px;top:480px" width="16" height="11" viewBox="0 0 16 11"><path d="M0.5 8 V4.5 Q0.5 3.5 1.5 3.5 Q2.5 3.5 2.5 4.5 V8 M0 6 H3" fill="none" stroke="#5a5a5a" stroke-width="1"/><rect x="4" y="0" width="7" height="11" rx="1" fill="#0a9a22"/><rect x="6" y="3" width="3" height="5" fill="#fff"/><rect x="7" y="4" width="1" height="1" fill="#0a9a22"/><rect x="7" y="6" width="1" height="1" fill="#0a9a22"/><path d="M15 3.5 H13.5 Q12.5 3.5 12.5 4.5 V6.5 Q12.5 7.5 13.5 7.5 H15" fill="none" stroke="#5a5a5a" stroke-width="1"/></svg>
<svg style="left:1392px;top:480px" width="16" height="11" viewBox="0 0 16 11"><path d="M0.5 8 V4.5 Q0.5 3.5 1.5 3.5 Q2.5 3.5 2.5 4.5 V8 M0 6 H3" fill="none" stroke="#5a5a5a" stroke-width="1"/><rect x="4" y="0" width="7" height="11" rx="1" fill="#0a9a22"/><rect x="6" y="3" width="3" height="5" fill="#fff"/><rect x="7" y="4" width="1" height="1" fill="#0a9a22"/><rect x="7" y="6" width="1" height="1" fill="#0a9a22"/><path d="M15 3.5 H13.5 Q12.5 3.5 12.5 4.5 V6.5 Q12.5 7.5 13.5 7.5 H15" fill="none" stroke="#5a5a5a" stroke-width="1"/></svg>
<div class="a" style="left:230px;top:495px;width:1303px;height:4px;background:linear-gradient(#f8fbff,#d8e6f9)"></div>
<div class="a" style="left:230px;top:476px;width:11px;height:23px;background:linear-gradient(#f4f8fe,#d0e1f7)"></div>
<div class="a" style="left:230px;top:500px;width:11px;height:17px;background:linear-gradient(#f6f9fe,#d6e5f9)"></div>
<div class="a" style="left:230px;top:518px;width:11px;height:17px;background:linear-gradient(#f6f9fe,#d6e5f9)"></div>
<div class="a" style="left:241px;top:495px;width:1px;height:40px;background:#6a98d6"></div>
<div class="a" style="left:230px;top:499px;width:11px;height:1px;background:#6a98d6"></div>
<svg style="left:232px;top:483px" width="8" height="9" viewBox="0 0 8 9"><ellipse cx="4" cy="2.2" rx="3.2" ry="1.6" fill="none" stroke="#6a9ee0" stroke-width="1"/><path d="M1 3 L3 5.3 V8.8 M7 3 L5 5.3 V8.8" fill="none" stroke="#6a9ee0" stroke-width="1"/></svg>
<div class="a" style="left:230px;top:517px;width:11px;height:1px;background:#6a98d6"></div>
<div class="a" style="left:230px;top:535px;width:12px;height:1px;background:#6a98d6"></div>
<svg style="left:232px;top:503px" width="8" height="11"><path d="M1.8 1.5 L5.8 5.5 L1.8 9.5" fill="none" stroke="#6a9ee0" stroke-width="2.3"/></svg>
<div class="a" style="left:242px;top:499px;width:1291px;height:18px;background:#7c99de"></div>
<div class="a" style="left:296px;top:499px;width:1px;height:18px;background:#e8eefa"></div>
<div class="a" style="left:368px;top:499px;width:1px;height:18px;background:#e8eefa"></div>
<div class="a" style="left:446px;top:499px;width:1px;height:18px;background:#e8eefa"></div>
<div class="a" style="left:545px;top:499px;width:1px;height:18px;background:#e8eefa"></div>
<div class="a" style="left:665px;top:499px;width:1px;height:18px;background:#e8eefa"></div>
<div class="a" style="left:815px;top:499px;width:1px;height:18px;background:#e8eefa"></div>
<div class="a" style="left:895px;top:499px;width:1px;height:18px;background:#e8eefa"></div>
<div class="a" style="left:975px;top:499px;width:1px;height:18px;background:#e8eefa"></div>
<div class="a" style="left:1065px;top:499px;width:1px;height:18px;background:#e8eefa"></div>
<div class="a" style="left:1192px;top:499px;width:1px;height:18px;background:#e8eefa"></div>
<div class="a" style="left:1227px;top:499px;width:1px;height:18px;background:#e8eefa"></div>
<div class="a" style="left:1297px;top:499px;width:1px;height:18px;background:#e8eefa"></div>
<div class="a" style="left:1387px;top:499px;width:1px;height:18px;background:#e8eefa"></div>
<div class="t" style="left:241px;top:503px;width:52px;text-align:right;color:#fff;">215</div>
<svg style="left:300px;top:503px" width="13" height="13" viewBox="0 0 13 13"><defs><linearGradient id="ck0" x1="0" y1="0" x2="0" y2="1"><stop offset="0" stop-color="#c4e07a"/><stop offset="1" stop-color="#7cb032"/></linearGradient></defs><path d="M0.3 7.4 L1.9 5.9 L4.6 8.3 L10.3 0.9 L11.8 0.2 L11.6 2.7 L5 11.9 Z" fill="url(#ck0)" stroke="#7aa83a" stroke-width="0.6" stroke-linejoin="round"/></svg>
<div class="t" style="left:316px;top:503px;color:#fff">Onaylandı</div>
<div class="t" style="left:370px;top:503px;width:75px;overflow:hidden;color:#fff"></div>
<div class="t" style="left:448px;top:503px;width:96px;overflow:hidden;color:#fff">2025-02-18</div>
<div class="t" style="left:547px;top:503px;width:117px;overflow:hidden;color:#fff">Nakit tahsilat</div>
<div class="t" style="left:667px;top:503px;width:147px;overflow:hidden;color:#fff">Müşteri-4</div>
<div class="t" style="left:815px;top:503px;width:77px;text-align:right;color:#fff;">20.400,00</div>
<div class="t" style="left:895px;top:503px;width:77px;text-align:right;color:#fff;">,00</div>
<div class="t" style="left:975px;top:503px;width:87px;text-align:right;color:#fff;">20.400,00 [B]</div>
<div class="t" style="left:1065px;top:503px;width:124px;text-align:right;color:#fff;font-weight:bold;letter-spacing:0.45px">144.600,00 [A]</div>
<div class="t" style="left:1194px;top:503px;width:32px;overflow:hidden;color:#fff">TL</div>
<div class="t" style="left:1227px;top:503px;width:67px;text-align:right;color:#fff;">1,0000</div>
<div class="t" style="left:1297px;top:503px;width:87px;text-align:right;color:#fff;">20.400,00 [B]</div>
<div class="t" style="left:1389px;top:503px;width:143px;overflow:hidden;color:#fff">427 Nolu Satış Tahsilatı</div>
<div class="a" style="left:242px;top:517px;width:1291px;height:19px;background:#f3faf0;border-bottom:1px solid #dde9f8"></div>
<div class="a" style="left:296px;top:517px;width:1px;height:18px;background:#dde9f8"></div>
<div class="a" style="left:368px;top:517px;width:1px;height:18px;background:#dde9f8"></div>
<div class="a" style="left:446px;top:517px;width:1px;height:18px;background:#dde9f8"></div>
<div class="a" style="left:545px;top:517px;width:1px;height:18px;background:#dde9f8"></div>
<div class="a" style="left:665px;top:517px;width:1px;height:18px;background:#dde9f8"></div>
<div class="a" style="left:815px;top:517px;width:1px;height:18px;background:#dde9f8"></div>
<div class="a" style="left:895px;top:517px;width:1px;height:18px;background:#dde9f8"></div>
<div class="a" style="left:975px;top:517px;width:1px;height:18px;background:#dde9f8"></div>
<div class="a" style="left:1065px;top:517px;width:1px;height:18px;background:#dde9f8"></div>
<div class="a" style="left:1192px;top:517px;width:1px;height:18px;background:#dde9f8"></div>
<div class="a" style="left:1227px;top:517px;width:1px;height:18px;background:#dde9f8"></div>
<div class="a" style="left:1297px;top:517px;width:1px;height:18px;background:#dde9f8"></div>
<div class="a" style="left:1387px;top:517px;width:1px;height:18px;background:#dde9f8"></div>
<div class="t" style="left:241px;top:521px;width:52px;text-align:right;color:#000;">212</div>
<svg style="left:300px;top:521px" width="13" height="13" viewBox="0 0 13 13"><defs><linearGradient id="ck1" x1="0" y1="0" x2="0" y2="1"><stop offset="0" stop-color="#c4e07a"/><stop offset="1" stop-color="#7cb032"/></linearGradient></defs><path d="M0.3 7.4 L1.9 5.9 L4.6 8.3 L10.3 0.9 L11.8 0.2 L11.6 2.7 L5 11.9 Z" fill="url(#ck1)" stroke="#7aa83a" stroke-width="0.6" stroke-linejoin="round"/></svg>
<div class="t" style="left:316px;top:521px;color:#000">Onaylandı</div>
<div class="t" style="left:370px;top:521px;width:75px;overflow:hidden;color:#000"></div>
<div class="t" style="left:448px;top:521px;width:96px;overflow:hidden;color:#000">2025-02-18</div>
<div class="t" style="left:547px;top:521px;width:117px;overflow:hidden;color:#000">Nakit ödeme</div>
<div class="t" style="left:667px;top:521px;width:147px;overflow:hidden;color:#000">Tedarikçi 1</div>
<div class="t" style="left:815px;top:521px;width:77px;text-align:right;color:#000;">,00</div>
<div class="t" style="left:895px;top:521px;width:77px;text-align:right;color:#000;">180.000,00</div>
<div class="t" style="left:975px;top:521px;width:87px;text-align:right;color:#000;">180.000,00 [A]</div>
<div class="t" style="left:1065px;top:521px;width:124px;text-align:right;color:#000;font-weight:bold;letter-spacing:0.45px">165.000,00 [A]</div>
<div class="t" style="left:1194px;top:521px;width:32px;overflow:hidden;color:#000">TL</div>
<div class="t" style="left:1227px;top:521px;width:67px;text-align:right;color:#000;">1,0000</div>
<div class="t" style="left:1297px;top:521px;width:87px;text-align:right;color:#000;">180.000,00 [A]</div>
<div class="t" style="left:1389px;top:521px;width:143px;overflow:hidden;color:#000">426 Nolu Alış Ödemesi</div>
<div class="a" style="left:230px;top:647px;width:1303px;height:24px;border-top:1px solid #6a98d6;background:linear-gradient(#fbfdff,#e4eefc 50%,#c6dbf7)"></div>
<div class="a" style="left:816px;top:649px;width:79px;height:21px;border:1px solid #9dbbe6;background:linear-gradient(#fafcff,#e5eefb)"></div>
<div class="t" style="left:816px;top:655px;width:75px;text-align:right;color:#1e3f7a">20.400,00</div>
<div class="a" style="left:896px;top:649px;width:79px;height:21px;border:1px solid #9dbbe6;background:linear-gradient(#fafcff,#e5eefb)"></div>
<div class="t" style="left:896px;top:655px;width:75px;text-align:right;color:#1e3f7a">180.000,00</div>
<div class="a" style="left:976px;top:649px;width:89px;height:21px;border:1px solid #9dbbe6;background:linear-gradient(#fafcff,#e5eefb)"></div>
<div class="t" style="left:976px;top:655px;width:85px;text-align:right;color:#1e3f7a">159.600,00 [A]</div>
<div class="a" style="left:1298px;top:649px;width:89px;height:21px;border:1px solid #9dbbe6;background:linear-gradient(#fafcff,#e5eefb)"></div>
<div class="t" style="left:1298px;top:655px;width:85px;text-align:right;color:#1e3f7a">159.600,00 [A]</div>
<div class="a" style="left:230px;top:671px;width:164px;height:28px;background:linear-gradient(#e4effc,#dbe8fb 30%,#c2daf8 33%,#c8dcf8)"></div><div class="a" style="left:282px;top:671px;width:34px;height:28px;background:#fff"></div><div class="t" style="left:282px;top:679px;width:34px;text-align:center;color:#111">1 / 2</div><svg style="left:230px;top:671px" width="52" height="28" viewBox="0 0 52 28"><rect x="3.3" y="6.4" width="2.2" height="13.9" rx="0.8" fill="#8a8a8a"/><path d="M5.2 13.35 L12.9 6.4 V20.3Z M12.9 13.35 L21.3 6.4 V20.3Z" fill="#8a8a8a" stroke="#8a8a8a" stroke-width="0.8" stroke-linejoin="round"/><path d="M33.6 13.35 L41.4 6.6 V20.1Z" fill="#8a8a8a" stroke="#8a8a8a" stroke-width="0.8" stroke-linejoin="round"/></svg><svg style="left:316px;top:671px" width="78" height="28" viewBox="0 0 78 28"><path d="M9.9 6.8 L17.4 13.35 L9.9 19.9Z" fill="#173e8c" stroke="#173e8c" stroke-width="0.9" stroke-linejoin="round"/><path d="M30.1 6.8 L37.4 13.35 L30.1 19.9Z M38 6.8 L45.6 13.35 L38 19.9Z" fill="#173e8c" stroke="#173e8c" stroke-width="0.9" stroke-linejoin="round"/><rect x="45.6" y="6.4" width="2.2" height="13.9" rx="0.8" fill="#173e8c"/><path d="M55.6 14 Q56.8 6.4 64.3 6.4 Q68.3 6.4 70.6 10.4 L73.3 8.4 L73.3 18.2 L64.6 18.2 L67.2 15.2 Q65.8 11.4 63.3 11.4 Q59.6 11.4 58.4 16.4 Z" fill="#173e8c"/></svg><div class="a" style="left:394px;top:671px;width:49px;height:28px;background:#e2eefe"></div><div class="a" style="left:443px;top:671px;width:1090px;height:28px;background:#ececec"></div><svg style="left:448px;top:680px" width="6" height="10"><path d="M5.5 0 L0 5 L5.5 10Z" fill="#4a5a7a"/></svg><svg style="left:1523px;top:680px" width="6" height="10"><path d="M0 0 L5.5 5 L0 10Z" fill="#4a5a7a"/></svg><div class="a" style="left:461px;top:672px;width:639px;height:26px;border:1px solid #56688a;border-radius:2px;background:linear-gradient(#e6e9ee,#dfe3e9 25%,#c5d0de 30%,#b7c5d8 60%,#d3d9e2)"></div><svg style="left:776px;top:681px" width="8" height="8"><path d="M0.5 0 V7 M2.5 0 V7 M4.5 0 V7 M6.5 0 V7" stroke="#2a3350" stroke-width="1"/></svg>
<div class="badge" style="left:205.7px;top:106.7px;width:29.4px;height:29.4px"></div><svg style="left:216px;top:114px" width="6" height="14" viewBox="0 0 6 14"><path d="M2.6 1 H5.2 V13.1 H2.6 V3.6 C2 4.2 1.4 4.4 0.9 4.5 V2.6 C1.6 2.4 2.2 1.8 2.6 1Z" fill="#fff"/></svg>
</body></html>
